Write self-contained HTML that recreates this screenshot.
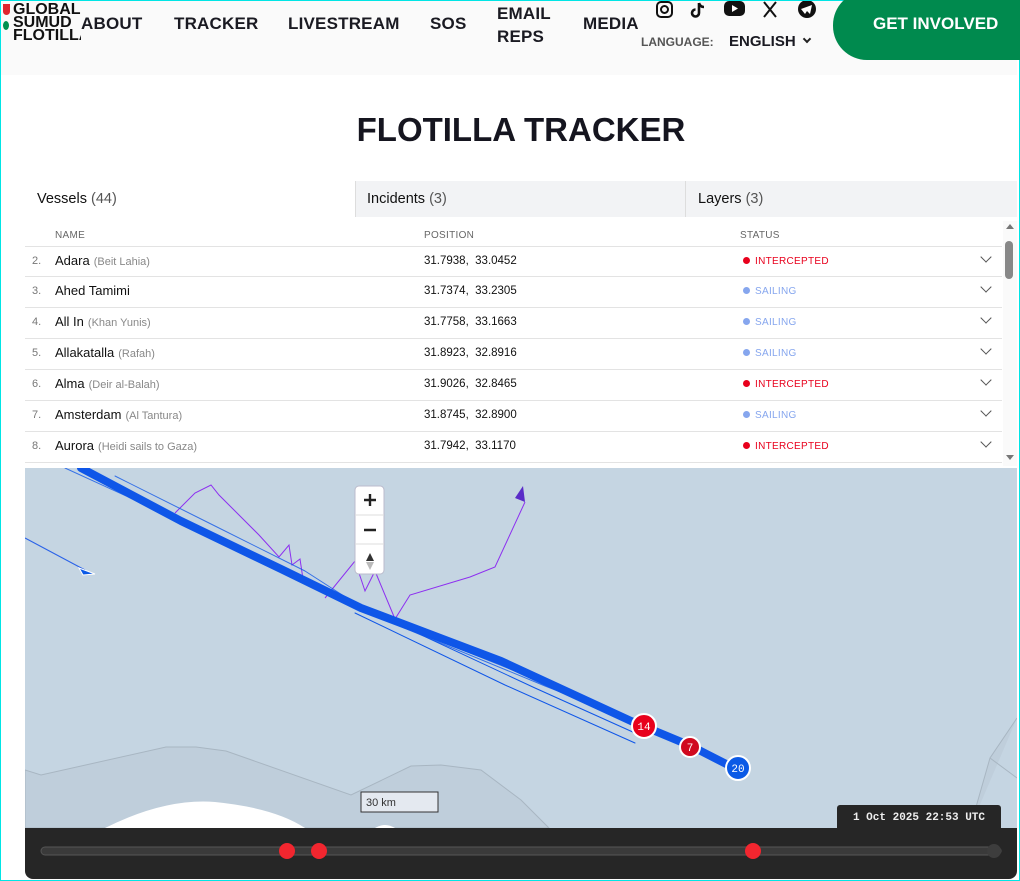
<!DOCTYPE html>
<html><head><meta charset="utf-8"><style>
*{box-sizing:border-box;margin:0;padding:0}
body{width:1020px;height:881px;overflow:hidden;background:#fff;font-family:"Liberation Sans",sans-serif;position:relative;border:1px solid #00e5e5}
.hdr{position:absolute;left:0;top:0;width:1016px;height:74px;background:#fafafa}
.nav{position:absolute;font-weight:900;font-size:17px;color:#1a1a22;letter-spacing:0.2px}
.logo{position:absolute;left:12px;top:2px;font-size:16px;line-height:13px;font-weight:700;color:#111;width:68px;overflow:hidden;white-space:nowrap}
.btn{position:absolute;left:832px;top:-10px;width:200px;height:69px;background:#008a4e;border-radius:34px 0 0 34px;color:#fff;font-weight:900;font-size:17px;padding:23px 0 0 40px}
h1{position:absolute;left:0;width:1040px;top:110px;text-align:center;font-size:33px;font-weight:700;color:#15151f}
.tab{position:absolute;top:180px;height:36px;font-size:14.5px;color:#111;padding:10px 12px}
.tab span{color:#555}
.th{position:absolute;top:229px;font-size:10px;color:#666;letter-spacing:.3px}
.row{position:absolute;left:24px;width:977px;height:31px;border-top:1px solid #e3e3e3;font-size:13px}
.row .n{position:absolute;left:7px;top:8px;color:#777;font-size:11px}
.row .nm{position:absolute;left:30px;top:6px;color:#111}
.row .nm i{font-style:normal;color:#888;font-size:11px;margin-left:4px}
.row .p{position:absolute;left:399px;top:8px;font-size:11.5px;color:#111}
.row .s{position:absolute;left:718px;top:9px;font-size:10px;letter-spacing:.3px}
.row .s:before{content:"";display:inline-block;width:7px;height:7px;border-radius:50%;background:currentColor;margin-right:5px}
.row .c{position:absolute;left:957px;top:6px;width:8px;height:8px;border-right:1.5px solid #555;border-bottom:1.5px solid #555;transform:rotate(45deg)}
.int{color:#e8001c}.sai{color:#86a6ee}
</style></head><body>
<div class="hdr"></div>
<div style="position:absolute;left:2px;top:3px;width:7px;height:11px;background:#e0242e;border-radius:0 0 4px 4px"></div>
<div style="position:absolute;left:2px;top:20px;width:6px;height:9px;background:#00924f;border-radius:50%"></div>
<div class="logo">GLOBAL<br>SUMUD<br>FLOTILLA</div>
<div class="nav" style="left:80px;top:13px">ABOUT</div>
<div class="nav" style="left:173px;top:13px">TRACKER</div>
<div class="nav" style="left:287px;top:13px">LIVESTREAM</div>
<div class="nav" style="left:429px;top:13px">SOS</div>
<div class="nav" style="left:496px;top:1px;line-height:23px">EMAIL<br>REPS</div>
<div class="nav" style="left:582px;top:13px">MEDIA</div>
<svg style="position:absolute;left:654px;top:0" width="170" height="20">
<rect x="2" y="1" width="15" height="15" rx="4" fill="none" stroke="#111" stroke-width="2"/><circle cx="9.5" cy="8.5" r="3.5" fill="none" stroke="#111" stroke-width="2"/>
<path d="M44 2v10a3.5 3.5 0 1 1-3.5-3.5M44 2q1 4 5 4" fill="none" stroke="#111" stroke-width="2.6"/>
<rect x="69" y="0" width="21" height="15" rx="5" fill="#111"/><path d="M77 4l6 3.5-6 3.5z" fill="#fff"/>
<path d="M109 1l12 15M121 1l-12 15" stroke="#111" stroke-width="2"/>
<circle cx="152" cy="8" r="9" fill="#111"/><path d="M146 8l11-4-2 9-3-3-2 3z" fill="#fff"/>
</svg>
<div style="position:absolute;left:640px;top:34px;font-size:12px;font-weight:900;color:#555">LANGUAGE:</div>
<div style="position:absolute;left:728px;top:32px;font-size:15px;font-weight:900;color:#1a1a22">ENGLISH</div>
<div style="position:absolute;left:803px;top:35px;width:6px;height:6px;border-right:2px solid #222;border-bottom:2px solid #222;transform:rotate(45deg)"></div>
<div class="btn">GET INVOLVED</div>
<h1>FLOTILLA TRACKER</h1>
<div style="position:absolute;left:354px;top:180px;width:662px;height:36px;background:#f2f3f5"></div>
<div style="position:absolute;left:684px;top:180px;width:1px;height:36px;background:#ddd"></div>
<div style="position:absolute;left:354px;top:180px;width:1px;height:36px;background:#ddd"></div>
<div class="tab" style="left:24px">Vessels <span>(44)</span></div>
<div class="tab" style="left:354px">Incidents <span>(3)</span></div>
<div class="tab" style="left:685px">Layers <span>(3)</span></div>
<div class="th" style="left:54px">NAME</div><div class="th" style="left:423px">POSITION</div><div class="th" style="left:739px">STATUS</div>
<div class="row" style="top:245px"><span class="n">2.</span><span class="nm">Adara<i>(Beit Lahia)</i></span><span class="p">31.7938, &nbsp;33.0452</span><span class="s int">INTERCEPTED</span><span class="c"></span></div>
<div class="row" style="top:275px"><span class="n">3.</span><span class="nm">Ahed Tamimi</span><span class="p">31.7374, &nbsp;33.2305</span><span class="s sai">SAILING</span><span class="c"></span></div>
<div class="row" style="top:306px"><span class="n">4.</span><span class="nm">All In<i>(Khan Yunis)</i></span><span class="p">31.7758, &nbsp;33.1663</span><span class="s sai">SAILING</span><span class="c"></span></div>
<div class="row" style="top:337px"><span class="n">5.</span><span class="nm">Allakatalla<i>(Rafah)</i></span><span class="p">31.8923, &nbsp;32.8916</span><span class="s sai">SAILING</span><span class="c"></span></div>
<div class="row" style="top:368px"><span class="n">6.</span><span class="nm">Alma<i>(Deir al-Balah)</i></span><span class="p">31.9026, &nbsp;32.8465</span><span class="s int">INTERCEPTED</span><span class="c"></span></div>
<div class="row" style="top:399px"><span class="n">7.</span><span class="nm">Amsterdam<i>(Al Tantura)</i></span><span class="p">31.8745, &nbsp;32.8900</span><span class="s sai">SAILING</span><span class="c"></span></div>
<div class="row" style="top:430px"><span class="n">8.</span><span class="nm">Aurora<i>(Heidi sails to Gaza)</i></span><span class="p">31.7942, &nbsp;33.1170</span><span class="s int">INTERCEPTED</span><span class="c"></span></div>
<div class="row" style="top:461px;height:4px"></div>
<div style="position:absolute;left:1002px;top:220px;width:14px;height:245px;background:#fafafa"></div>
<div style="position:absolute;left:1004px;top:240px;width:8px;height:38px;background:#888;border-radius:4px"></div>
<div style="position:absolute;left:1005px;top:223px;border:4px solid transparent;border-bottom:5px solid #777;border-top:0"></div>
<div style="position:absolute;left:1005px;top:454px;border:4px solid transparent;border-top:5px solid #777;border-bottom:0"></div>
<svg style="position:absolute;left:24px;top:467px" width="992" height="411">
<rect width="992" height="360" fill="#c5d5e2"/>
<path d="M0 302l16 5 125-28 30 0 30 4 125 44 60-29 30-1 40 5 40 30 28 28L0 360z" fill="#bfcedb" stroke="#a8b6c2" stroke-width="1"/>
<path d="M80 360q60-30 110-26 60 6 90 26z" fill="#fff"/>
<path d="M350 360q10-6 20 0z" fill="#fff"/>
<path d="M945 360l20-70 27-40M965 290l27 20" fill="#bfcedb" stroke="#a8b6c2"/>
<path d="M0 70l60 32" stroke="#2a62e8" stroke-width="1"/><path d="M54 100l16 6-12 1z" fill="#0b5ae6" stroke="#fff"/>
<path d="M150 45l20-20 16-8 8 10 40 40 20 22 10-12 3 20 8-6 3 20" fill="none" stroke="#8d2ff0"/>
<path d="M300 130l30-37 10 30 10-20 20 48 15-24 60-18 25-10 30-65" fill="none" stroke="#8d2ff0"/>
<path d="M490 30l8-12 2 16z" fill="#5a2cc8"/>
<g fill="none" stroke="#0f56e8" stroke-linejoin="round" stroke-linecap="round">
<path d="M56 0l100 53 100 48 80 39 140 53 130 60 60 25 45 23" stroke-width="8"/>
<path d="M40 0l120 55 110 50 70 38 150 60 120 55" stroke-width="1" opacity=".8"/>
<path d="M90 8l100 50 90 45 70 45 170 70 90 35" stroke-width="1" opacity=".8"/>
<path d="M330 145l150 72 130 58" stroke-width="1"/>
<path d="M360 150l150 70 100 45" stroke-width="1"/>
</g>
<circle cx="619" cy="258" r="12" fill="#e8001c" stroke="#fff" stroke-width="2"/><text x="619" y="262" fill="#fff" font-size="11" text-anchor="middle" font-family="Liberation Mono">14</text>
<circle cx="665" cy="279" r="10" fill="#d0091f" stroke="#fff" stroke-width="2"/><text x="665" y="283" fill="#fff" font-size="11" text-anchor="middle" font-family="Liberation Mono">7</text>
<circle cx="713" cy="300" r="12" fill="#0b5ae6" stroke="#fff" stroke-width="2"/><text x="713" y="304" fill="#fff" font-size="11" text-anchor="middle" font-family="Liberation Mono">20</text>
<rect x="336" y="324" width="77" height="20" fill="#e4e9f0" stroke="#333"/><text x="341" y="338" font-size="11" fill="#333">30 km</text>
<rect x="330" y="18" width="29" height="88" rx="4" fill="#fff" stroke="#bbc"/>
<path d="M339 32h12M345 26v12M339 62h12" stroke="#222" stroke-width="2.4"/><path d="M330 47h29M330 76h29" stroke="#ddd"/>
<path d="M341 93l4-8 4 8z" fill="#333"/><path d="M341 94l4 8 4-8z" fill="#bbb"/>
<rect x="812" y="337" width="164" height="30" rx="3" fill="#262626"/>
<text x="894" y="352" fill="#eee" font-size="11" font-weight="bold" text-anchor="middle" font-family="Liberation Mono">1 Oct 2025 22:53 UTC</text>
<path d="M0 360h992v43a8 8 0 0 1-8 8H8a8 8 0 0 1-8-8z" fill="#262626"/>
<rect x="16" y="379" width="960" height="8" rx="4" fill="#3a3a3a" stroke="#555"/>
<circle cx="262" cy="383" r="8" fill="#f2262f"/><circle cx="294" cy="383" r="8" fill="#f2262f"/><circle cx="728" cy="383" r="8" fill="#f2262f"/><circle cx="969" cy="383" r="7" fill="#3d3d3d"/>
</svg>
</body></html>
